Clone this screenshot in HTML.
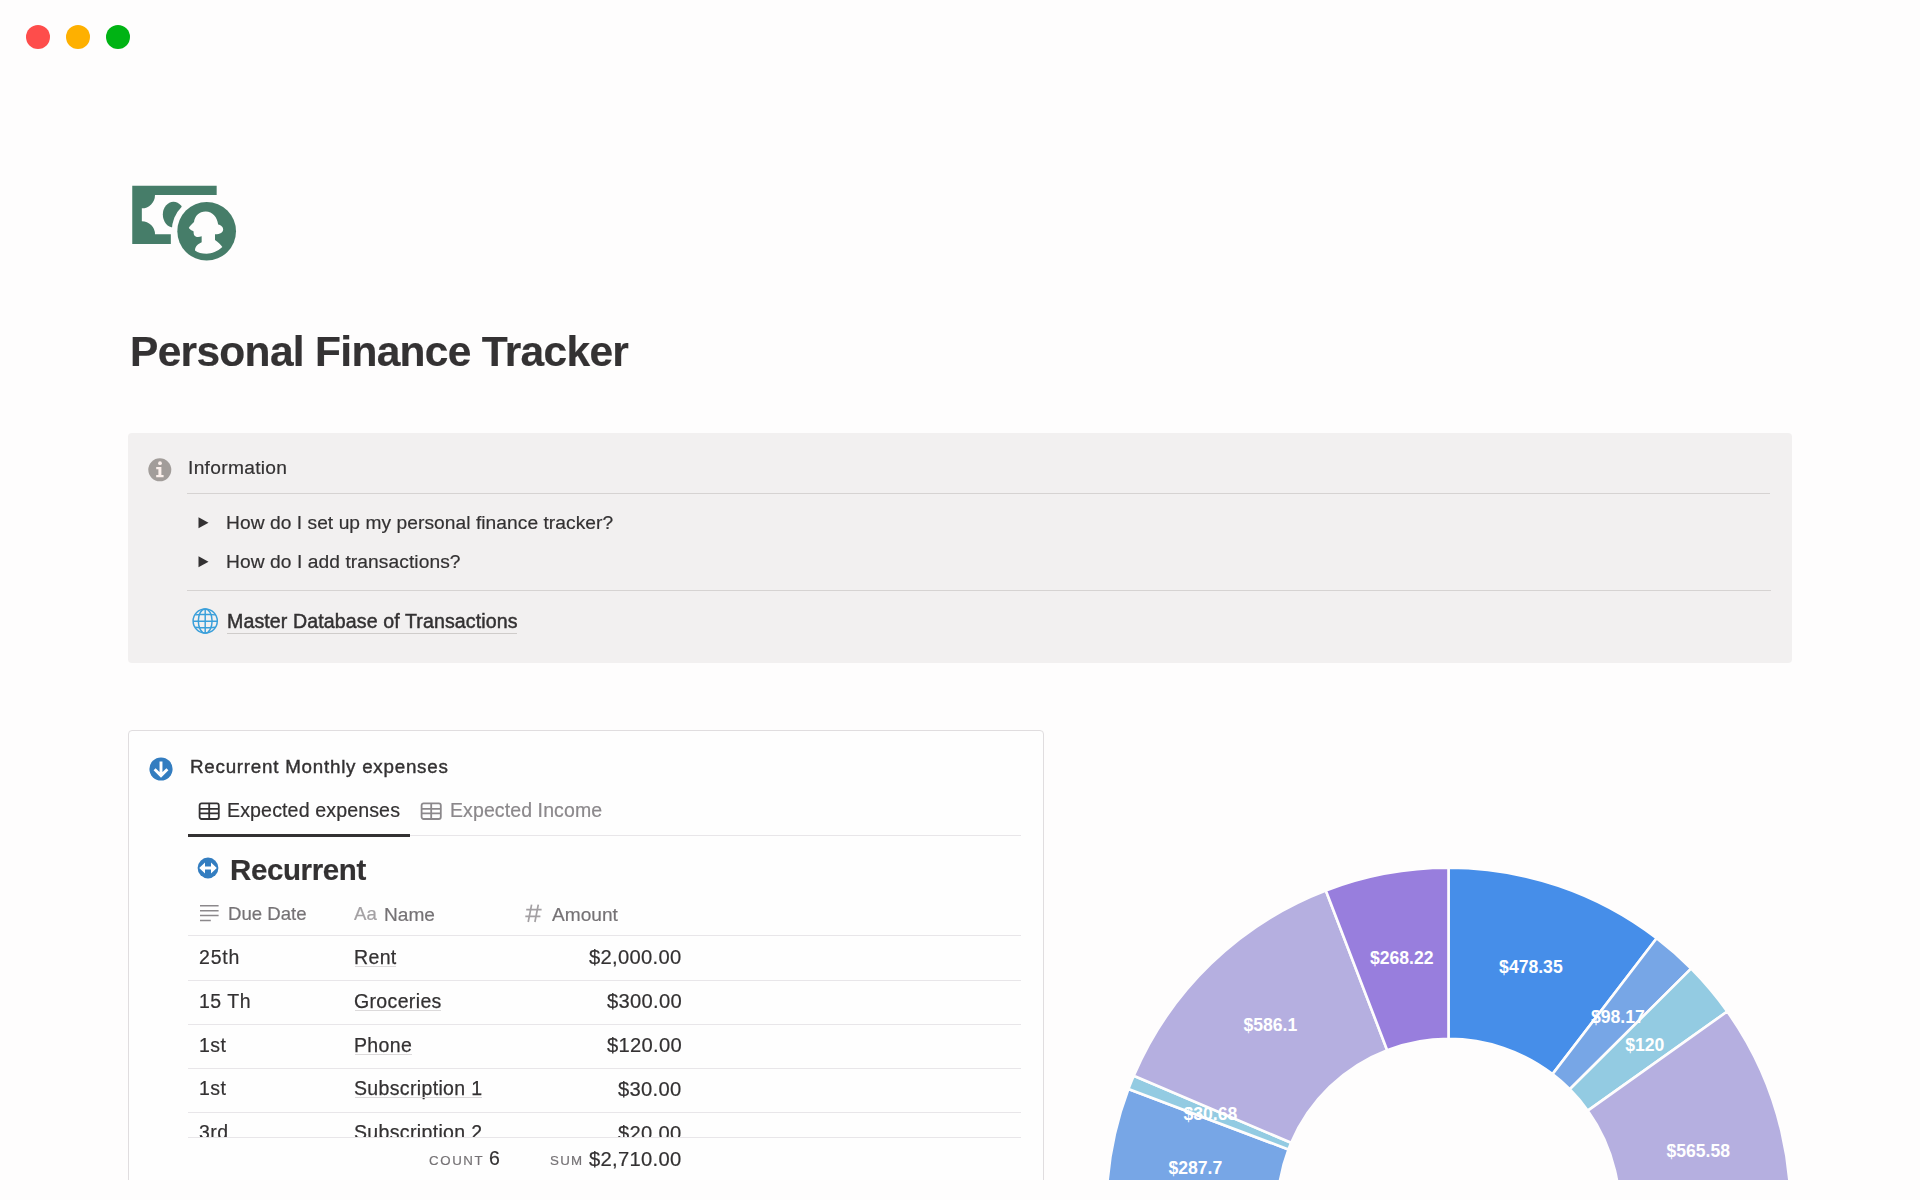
<!DOCTYPE html>
<html><head><meta charset="utf-8">
<style>
html,body{margin:0;padding:0;}
body{width:1920px;height:1200px;position:relative;overflow:hidden;background:#fefdfd;font-family:"Liberation Sans",sans-serif;color:#333132;}
.t{position:absolute;line-height:1;white-space:nowrap;will-change:transform;-webkit-text-stroke:0.2px currentColor;}
.abs{position:absolute;}
</style></head>
<body>
<!-- traffic lights -->
<div class="abs" style="left:26px;top:25px;width:24px;height:24px;border-radius:50%;background:#fe4d4b"></div>
<div class="abs" style="left:66px;top:25px;width:24px;height:24px;border-radius:50%;background:#feb000"></div>
<div class="abs" style="left:106px;top:25px;width:24px;height:24px;border-radius:50%;background:#00b314"></div>

<!-- page icon -->
<svg class="abs" style="left:120px;top:170px" width="130" height="100" viewBox="0 0 1560 1200">
  <g fill="#467d69">
    <path d="M147 188H1160V300H420A158 160 0 0 1 262 460V615A158 157 0 0 1 420 772H610V888H147Z"/>
    <ellipse cx="642" cy="535" rx="128" ry="155"/>
  </g>
  <circle cx="1040" cy="735" r="420" fill="#fefdfd"/>
  <circle cx="1040" cy="735" r="352" fill="#467d69"/>
  <path fill="#fefdfd" d="M1030 497C1110 500 1165 560 1178 655C1215 660 1240 690 1238 715C1236 750 1205 772 1140 772L1140 840C1180 865 1210 895 1228 925C1170 980 1100 1005 1040 1005C980 1005 935 990 900 965C900 920 935 890 980 868L980 795C950 808 915 810 895 790C880 770 885 745 882 735C860 725 840 712 825 695C840 670 870 645 888 625C895 550 955 495 1030 497Z"/>
</svg>

<!-- title -->
<div class="t" style="left:129.8px;top:330.9px;font-size:42.5px;font-weight:700;letter-spacing:-0.7px;color:#343233">Personal Finance Tracker</div>

<!-- callout -->
<div class="abs" style="left:128px;top:433px;width:1664px;height:230px;background:#f2f0f0;border-radius:4px"></div>
<svg class="abs" style="left:148px;top:458px" width="24" height="24" viewBox="0 0 24 24">
  <circle cx="11.8" cy="11.8" r="11.5" fill="#a29d9a"/>
  <circle cx="12" cy="5.2" r="1.9" fill="#fbf0ec"/>
  <path d="M8.2 9H13.4V16.9H15.6V19.2H8.2V16.9H10.4V11.3H8.2Z" fill="#fbf0ec"/>
</svg>
<div class="t" style="left:188.4px;top:458.3px;font-size:19.2px;letter-spacing:0.3px">Information</div>
<div class="abs" style="left:187px;top:492.5px;width:1583px;height:1.3px;background:#d6d3d2"></div>
<svg class="abs" style="left:198px;top:516px" width="12" height="14" viewBox="0 0 12 14"><path d="M0.5 1.2L10.5 6.7L0.5 12.2Z" fill="#333132"/></svg>
<div class="t" style="left:226px;top:512.6px;font-size:19.2px;letter-spacing:0.05px">How do I set up my personal finance tracker?</div>
<svg class="abs" style="left:198px;top:555px" width="12" height="14" viewBox="0 0 12 14"><path d="M0.5 1.2L10.5 6.7L0.5 12.2Z" fill="#333132"/></svg>
<div class="t" style="left:226px;top:551.7px;font-size:19.2px;letter-spacing:0.08px">How do I add transactions?</div>
<div class="abs" style="left:187px;top:589.8px;width:1584px;height:1.3px;background:#d6d3d2"></div>
<!-- globe -->
<svg class="abs" style="left:191px;top:607px" width="28" height="28" viewBox="0 0 28 28">
  <g fill="none" stroke="#3a9fda" stroke-width="1.45">
    <circle cx="14.2" cy="14" r="12.1"/>
    <ellipse cx="14.2" cy="14" rx="6.9" ry="12.1"/>
    <path d="M14.2 1.9V26.1M2.1 14.3H26.3M4.2 7.9Q14.2 6.6 24.2 7.9M4.2 20.2Q14.2 21.4 24.2 20.2"/>
  </g>
</svg>
<div class="t" style="left:226.8px;top:611.8px;font-size:19.6px;letter-spacing:0.1px;-webkit-text-stroke:0.45px #333132;color:#333132">Master Database of Transactions</div>
<div class="abs" style="left:227px;top:633px;width:290px;height:1.3px;background:#cfccca"></div>

<!-- database block -->
<div class="abs" style="left:128px;top:730px;width:916px;height:470px;border:1.4px solid #e0dddf;border-radius:4px;box-sizing:border-box;background:#fefefe"></div>
<svg class="abs" style="left:149.3px;top:756.6px" width="24" height="24" viewBox="0 0 24 24">
  <circle cx="12" cy="12" r="11.6" fill="#337dc0"/>
  <path d="M12 4.6V18.2M5.6 12.2L12 18.6L18.4 12.2" fill="none" stroke="#fff" stroke-width="2.9"/>
</svg>
<div class="t" style="left:189.9px;top:757.6px;font-size:18.8px;letter-spacing:0.75px;-webkit-text-stroke:0.4px #333132;color:#333132">Recurrent Monthly expenses</div>

<!-- tabs -->
<svg class="abs" style="left:198px;top:801.8px" width="23" height="19" viewBox="0 0 23 19">
  <g fill="none" stroke="#333132" stroke-width="1.8">
    <rect x="1.6" y="1.4" width="19.2" height="15.6" rx="2"/>
    <path d="M1.6 6.8H20.8M1.6 11.4H20.8M11.2 1.4V17"/>
  </g>
</svg>
<div class="t" style="left:227.2px;top:800.7px;font-size:19.6px;letter-spacing:0.12px;color:#333132">Expected expenses</div>
<svg class="abs" style="left:420px;top:801.8px" width="23" height="19" viewBox="0 0 23 19">
  <g fill="none" stroke="#8b888b" stroke-width="1.8">
    <rect x="1.6" y="1.4" width="19.2" height="15.6" rx="2"/>
    <path d="M1.6 6.8H20.8M1.6 11.4H20.8M11.2 1.4V17"/>
  </g>
</svg>
<div class="t" style="left:450px;top:800.7px;font-size:19.5px;letter-spacing:0.1px;color:#8b888b">Expected Income</div>
<div class="abs" style="left:188px;top:835px;width:833px;height:1.2px;background:#e8e6e9"></div>
<div class="abs" style="left:188px;top:833.5px;width:222px;height:3px;background:#333132"></div>

<!-- Recurrent heading -->
<svg class="abs" style="left:196px;top:856px" width="24" height="24" viewBox="0 0 24 24">
  <circle cx="12" cy="12" r="10.4" fill="#337dc0"/>
  <path d="M3.2 12L9 6.6V10.5H15V6.6L20.8 12L15 17.4V13.5H9V17.4Z" fill="#fff"/>
</svg>
<div class="t" style="left:230px;top:855.3px;font-size:29.5px;font-weight:700;letter-spacing:-0.38px;color:#333132">Recurrent</div>

<!-- table header -->
<svg class="abs" style="left:199px;top:904px" width="21" height="19" viewBox="0 0 21 19">
  <g stroke="#8b888b" stroke-width="1.5">
    <path d="M1 1.7H19.6M1 6.8H19.6M1 11.6H19.6M1 16.5H11.8"/>
  </g>
</svg>
<div class="t" style="left:228px;top:904.8px;font-size:18.6px;color:#757275">Due Date</div>
<div class="t" style="left:354px;top:904.8px;font-size:18.6px;color:#a3a0a3">Aa</div>
<div class="t" style="left:383.5px;top:904.8px;font-size:19.1px;color:#757275">Name</div>
<svg class="abs" style="left:520px;top:900px" width="26" height="26" viewBox="520 900 26 26"><path d="M531.6 904.6L528.2 922M538.3 904.6L534.9 922M526.2 909.7H541.6M525.3 916.4H540.4" stroke="#a3a0a3" stroke-width="1.7" fill="none"/></svg>
<div class="t" style="left:552px;top:904.8px;font-size:19.1px;color:#757275">Amount</div>
<div class="abs" style="left:188px;top:935px;width:833px;height:1.2px;background:#e8e6e9"></div>

<div class="abs" style="left:0;top:936px;width:1920px;height:201px;overflow:hidden">
<div class="t" style="left:198.8px;top:11.5px;font-size:19.5px;letter-spacing:0.8px">25th</div>
<div class="t" style="left:354.3px;top:11.5px;font-size:19.5px;letter-spacing:0.35px;-webkit-text-stroke:0.25px #333132">Rent<div class="abs" style="left:1px;right:0.3px;top:18.1px;height:1.1px;background:#dcdadb"></div></div>
<div class="t" style="right:1238.0px;top:10.9px;font-size:20.2px;letter-spacing:0.3px">$2,000.00</div>
<div class="t" style="left:198.8px;top:55.7px;font-size:19.5px;letter-spacing:0.5px">15 Th</div>
<div class="t" style="left:354.3px;top:55.7px;font-size:19.5px;letter-spacing:0.35px;-webkit-text-stroke:0.25px #333132">Groceries<div class="abs" style="left:1px;right:0.3px;top:18.1px;height:1.1px;background:#dcdadb"></div></div>
<div class="t" style="right:1238.0px;top:55.1px;font-size:20.2px;letter-spacing:0.3px">$300.00</div>
<div class="t" style="left:198.8px;top:99.5px;font-size:19.5px;letter-spacing:0.5px">1st</div>
<div class="t" style="left:354.3px;top:99.5px;font-size:19.5px;letter-spacing:0.35px;-webkit-text-stroke:0.25px #333132">Phone<div class="abs" style="left:1px;right:0.3px;top:18.1px;height:1.1px;background:#dcdadb"></div></div>
<div class="t" style="right:1238.0px;top:98.9px;font-size:20.2px;letter-spacing:0.3px">$120.00</div>
<div class="t" style="left:198.8px;top:143.3px;font-size:19.5px;letter-spacing:0.5px">1st</div>
<div class="t" style="left:354.3px;top:143.3px;font-size:19.5px;letter-spacing:0.35px;-webkit-text-stroke:0.25px #333132">Subscription 1<div class="abs" style="left:1px;right:0.3px;top:18.1px;height:1.1px;background:#dcdadb"></div></div>
<div class="t" style="right:1238.0px;top:142.7px;font-size:20.2px;letter-spacing:0.3px">$30.00</div>
<div class="t" style="left:198.8px;top:187.1px;font-size:19.5px;letter-spacing:0.5px">3rd</div>
<div class="t" style="left:354.3px;top:187.1px;font-size:19.5px;letter-spacing:0.35px;-webkit-text-stroke:0.25px #333132">Subscription 2<div class="abs" style="left:1px;right:0.3px;top:18.1px;height:1.1px;background:#dcdadb"></div></div>
<div class="t" style="right:1238.0px;top:186.5px;font-size:20.2px;letter-spacing:0.3px">$20.00</div>
<div class="abs" style="left:188px;top:43.5px;width:833px;height:1.2px;background:#e8e6e9"></div>
<div class="abs" style="left:188px;top:87.5px;width:833px;height:1.2px;background:#e8e6e9"></div>
<div class="abs" style="left:188px;top:131.5px;width:833px;height:1.2px;background:#e8e6e9"></div>
<div class="abs" style="left:188px;top:175.5px;width:833px;height:1.2px;background:#e8e6e9"></div>
</div>
<div class="abs" style="left:188px;top:1137px;width:833px;height:1px;background:#e8e6e9"></div>
<div class="t" style="left:428.5px;top:1154.3px;font-size:13.3px;letter-spacing:1.6px;color:#757275">COUNT</div>
<div class="t" style="left:489px;top:1149.1px;font-size:19.5px">6</div>
<div class="t" style="left:549.5px;top:1154.3px;font-size:13.3px;letter-spacing:1.3px;color:#757275">SUM</div>
<div class="t" style="right:1238.0px;top:1148.5px;font-size:20.2px;letter-spacing:0.3px">$2,710.00</div>
<div class="abs" style="left:0;top:1180px;width:1920px;height:20px;background:#fefdfd"></div>
<svg class="abs" style="left:1040px;top:840px" width="880" height="340" viewBox="1040 840 880 340">
<g stroke="#fefdfd" stroke-width="2.6" stroke-linejoin="round">
<path d="M1448.50 867.70A342.1 342.1 0 0 1 1656.65 938.31L1552.54 1074.09A171.0 171.0 0 0 0 1448.50 1038.80Z" fill="#468EE9"/>
<path d="M1656.65 938.31A342.1 342.1 0 0 1 1691.11 968.61L1569.77 1089.24A171.0 171.0 0 0 0 1552.54 1074.09Z" fill="#77A6E6"/>
<path d="M1691.11 968.61A342.1 342.1 0 0 1 1727.25 1011.48L1587.83 1110.67A171.0 171.0 0 0 0 1569.77 1089.24Z" fill="#93CBE2"/>
<path d="M1727.25 1011.48A342.1 342.1 0 0 1 1786.50 1262.61L1617.45 1236.20A171.0 171.0 0 0 0 1587.83 1110.67Z" fill="#B5AFE0"/>
<path d="M1786.50 1262.61A342.1 342.1 0 0 1 1106.58 1221.00L1277.59 1215.40A171.0 171.0 0 0 0 1617.45 1236.20Z" fill="#B5AFE0"/>
<path d="M1106.58 1221.00A342.1 342.1 0 0 1 1128.41 1089.08L1288.50 1149.46A171.0 171.0 0 0 0 1277.59 1215.40Z" fill="#77A6E6"/>
<path d="M1128.41 1089.08A342.1 342.1 0 0 1 1133.75 1075.76L1291.17 1142.80A171.0 171.0 0 0 0 1288.50 1149.46Z" fill="#93CBE2"/>
<path d="M1133.75 1075.76A342.1 342.1 0 0 1 1325.82 890.45L1387.18 1050.17A171.0 171.0 0 0 0 1291.17 1142.80Z" fill="#B5AFE0"/>
<path d="M1325.82 890.45A342.1 342.1 0 0 1 1448.50 867.70L1448.50 1038.80A171.0 171.0 0 0 0 1387.18 1050.17Z" fill="#987EDD"/>
</g>
<g fill="#fff" font-family="Liberation Sans" font-weight="700" font-size="17.6" text-anchor="middle">
<text x="1530.9" y="972.9">$478.35</text>
<text x="1617.9" y="1023.2">$98.17</text>
<text x="1644.7" y="1050.5">$120</text>
<text x="1698.2" y="1157.0">$565.58</text>
<text x="1195.4" y="1174.0">$287.7</text>
<text x="1210.4" y="1120.4">$30.68</text>
<text x="1270.4" y="1031.3">$586.1</text>
<text x="1401.7" y="963.7">$268.22</text>
</g>
</svg>
</body></html>
